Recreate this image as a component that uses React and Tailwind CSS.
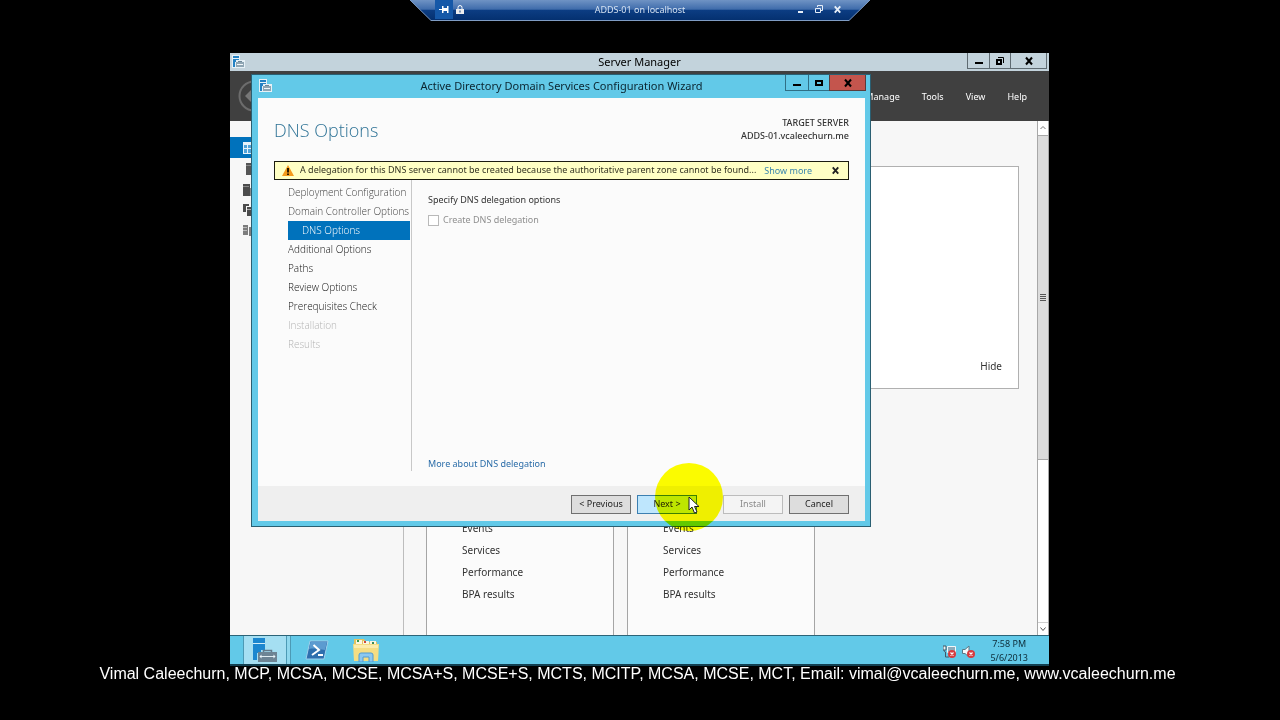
import React from 'react';

const menu = ['Manage', 'Tools', 'View', 'Help'];

const steps = [
  { label: 'Deployment Configuration', state: 'done' },
  { label: 'Domain Controller Options', state: 'done' },
  { label: 'DNS Options', state: 'current' },
  { label: 'Additional Options', state: 'next' },
  { label: 'Paths', state: 'next' },
  { label: 'Review Options', state: 'next' },
  { label: 'Prerequisites Check', state: 'next' },
  { label: 'Installation', state: 'disabled' },
  { label: 'Results', state: 'disabled' },
];

const stepStyles = {
  done: 'text-[#444444]',
  current: 'bg-[#0072bc] pl-[14px] text-white',
  next: 'text-[#111111]',
  disabled: 'text-[#b4b4b4]',
};

const roleLinks = ['Events', 'Services', 'Performance', 'BPA results'];

function ServerIcon({ className }) {
  return (
    <svg className={className} viewBox="0 0 24 24" aria-hidden="true">
      <path d="M0 0h12v5H0z" fill="#1c87cf" />
      <path d="M0 6h12v6H8v3H4v7H0z" fill="#1c87cf" />
      <path d="M0 5h12v1H0z" fill="#d3ecf7" />
      <path d="M10.500 14.500v-2h8v2" fill="none" stroke="#64798a" strokeWidth="1.500" />
      <path d="M5 14h19v10H5z" fill="#6d8494" />
      <path d="M7 18.500h15" stroke="#dfecf2" />
      <path d="M8.500 16.500l-2 2 2 2zM20.500 16.500l2 2-2 2z" fill="#eef6fa" />
    </svg>
  );
}

function SmallServerIcon({ className }) {
  return (
    <svg className={className} viewBox="0 0 13 13" aria-hidden="true">
      <path d="M0 0h8v5h5v8H0z" fill="#e6f1f7" />
      <path d="M1 1h6v2H1zM1 4h6v1H4v2H3v5H1z" fill="#2482c4" />
      <path d="M6 6h4v1H6z" fill="#6d8798" />
      <path d="M4 7h8v5H4z" fill="#8fa6b4" />
      <path d="M5 9h6v1H5z" fill="#f2f7fa" />
    </svg>
  );
}

function MinimizeIcon() {
  return (
    <svg className="h-3 w-3" viewBox="0 0 12 12" aria-hidden="true">
      <path d="M2 7h8v2H2z" fill="currentColor" />
    </svg>
  );
}

function MaximizeIcon() {
  return (
    <svg className="h-3 w-3" viewBox="0 0 12 12" aria-hidden="true">
      <path d="M2 3h8v6H2zM4 5v2h4V5z" fill="currentColor" fillRule="evenodd" />
    </svg>
  );
}

function RestoreIcon() {
  return (
    <svg className="h-3 w-3" viewBox="0 0 12 12" aria-hidden="true">
      <path d="M2 4h6v6H2zM4 6v2h2V6z" fill="currentColor" fillRule="evenodd" />
      <path d="M4 2.500h5.500V8" fill="none" stroke="currentColor" />
    </svg>
  );
}

function CloseIcon({ className = 'h-3 w-3' }) {
  return (
    <svg className={className} viewBox="0 0 12 12" aria-hidden="true">
      <path d="M3 2.500l6 7M9 2.500l-6 7" stroke="currentColor" strokeWidth="2" />
    </svg>
  );
}

function ConnectionBar() {
  return (
    <header className="relative mx-[410px] h-[21px] text-[#d5e2f2]">
      <svg className="absolute inset-0 h-full w-full" viewBox="0 0 460 21" preserveAspectRatio="none" aria-hidden="true">
        <defs>
          <linearGradient id="bar" x1="0" y1="0" x2="0" y2="1">
            <stop offset="0" stopColor="#6f93c4" />
            <stop offset="0.450" stopColor="#3f6cab" />
            <stop offset="0.500" stopColor="#0c3d83" />
            <stop offset="1" stopColor="#04306f" />
          </linearGradient>
        </defs>
        <path d="M0 0h460l-21 20.500H21z" fill="url(#bar)" />
        <path d="M0 0l21 20.500h418L460 0" fill="none" stroke="#7f9cc4" />
      </svg>
      <div className="relative grid h-[19px] grid-cols-[1fr_auto_1fr] items-center px-[25px]">
        <div className="flex h-full items-center">
          <button className="flex h-full w-[18px] items-center justify-center bg-[#1558a8]" aria-label="Pin">
            <svg className="h-[9px] w-[10px]" viewBox="0 0 10 9" aria-hidden="true">
              <path d="M0 4h4v1H0zM3 1h1.500v7H3zM4 3h4v3H4zM8 1h1.500v7H8z" fill="#fff" />
            </svg>
          </button>
          <svg className="ml-[3px] h-[9px] w-2" viewBox="0 0 8 9" aria-hidden="true">
            <path d="M2 4V2.500a2 2 0 0 1 4 0V4" fill="none" stroke="#fff" />
            <path d="M0 4h8v5H0zM3.500 5.500v2h1v-2z" fill="#eee" fillRule="evenodd" />
          </svg>
        </div>
        <div className="text-[9px] leading-3">ADDS-01 on localhost</div>
        <div className="flex justify-end gap-[7px] pr-[2px] text-[#e6eef8]">
          <button aria-label="Minimize connection">
            <svg className="h-3 w-3" viewBox="0 0 12 12" aria-hidden="true">
              <path d="M4 7h5v2H4z" fill="currentColor" />
            </svg>
          </button>
          <button aria-label="Restore connection">
            <svg className="h-3 w-3" viewBox="0 0 12 12" aria-hidden="true">
              <path d="M2.500 4.500h5v4h-5zM4.500 3V1.500h5v5H8" fill="none" stroke="currentColor" />
            </svg>
          </button>
          <button aria-label="Close connection">
            <CloseIcon className="h-[11px] w-[11px]" />
          </button>
        </div>
      </div>
    </header>
  );
}

function ServerManagerTitle() {
  return (
    <div className="grid h-[18px] grid-cols-[1fr_auto_1fr] bg-[#c3d3dc] text-black">
      <SmallServerIcon className="mt-[2px] ml-[2px] h-[13px] w-[13px]" />
      <div className="text-[11px] leading-[18px]">Server Manager</div>
      <div className="mr-[2px] flex h-4 justify-end">
        <button className="flex w-[23px] items-center justify-center border border-t-0 border-[#5f6b72]" aria-label="Minimize">
          <MinimizeIcon />
        </button>
        <button className="flex w-5 items-center justify-center border-b border-[#5f6b72]" aria-label="Restore">
          <RestoreIcon />
        </button>
        <button className="flex w-[37px] items-center justify-center border border-t-0 border-[#5f6b72]" aria-label="Close">
          <CloseIcon />
        </button>
      </div>
    </div>
  );
}

function ServerManagerHeader() {
  return (
    <div className="flex h-[50px] items-center justify-between bg-[#404040] pr-[22px] pl-2">
      <button aria-label="Back">
        <svg className="h-8 w-8" viewBox="0 0 32 32" aria-hidden="true">
          <circle cx="16" cy="16" r="14.500" fill="none" stroke="#6c6c6c" strokeWidth="2" />
          <path d="M7 16l8-8v16z" fill="#777" />
        </svg>
      </button>
      <nav className="flex gap-[22px] pt-[2px]">
        {menu.map((item) => (
          <button key={item} className="text-[9px] leading-3 text-white">
            {item}
          </button>
        ))}
      </nav>
    </div>
  );
}

function SideNav() {
  return (
    <aside className="w-[174px] border-r border-[#bdbdbd] pt-4">
      <div className="flex h-[21px] items-center bg-[#0072bc] pl-[13px]">
        <svg className="h-3 w-3" viewBox="0 0 12 12" aria-hidden="true">
          <path d="M0 0h12v12H0z" fill="#e6f3fb" />
          <path d="M1 3h3v3H1zM5 3h6v3H5zM1 7h3v4H1zM5 7h6v4H5z" fill="#4fa3da" />
        </svg>
      </div>
      <div className="flex h-[21px] items-center pl-4">
        <svg className="h-3 w-3" viewBox="0 0 12 12" aria-hidden="true">
          <path d="M0 0h8v12H0z" fill="#555" />
          <path d="M0 2h8v1H0z" fill="#888" />
        </svg>
      </div>
      <div className="flex h-[21px] items-center pl-[13px]">
        <svg className="h-3 w-3" viewBox="0 0 12 12" aria-hidden="true">
          <path d="M0 0h7v12H0zM7 4h5v8H7z" fill="#4c4c4c" />
          <path d="M0 2h6v1H0zM7 4h1v8H7z" fill="#8a8a8a" />
        </svg>
      </div>
      <div className="flex h-5 items-center pl-[13px]">
        <svg className="h-3 w-3" viewBox="0 0 12 12" aria-hidden="true">
          <path d="M0 0h6v2H3v6H0zM4 3h7v9H4z" fill="#4c4c4c" />
          <path d="M4 5h7v1H4z" fill="#aaa" />
        </svg>
      </div>
      <div className="flex h-5 items-center pl-[13px]">
        <svg className="h-3 w-3" viewBox="0 0 12 12" aria-hidden="true">
          <path d="M0 1h5v10H0zM6 3h5v9H6z" fill="#7d7d7d" />
          <path d="M0 3h4v1H0zM0 6h4v1H0z" fill="#bbb" />
        </svg>
      </div>
    </aside>
  );
}

function RoleCard() {
  return (
    <ul className="w-[188px] border-x border-[#a5a5a5] bg-[#fbfbfb] pt-[128px] pl-[35px]">
      {roleLinks.map((link) => (
        <li key={link} className="h-[22px] text-[10px] leading-[22px] text-[#333333]">
          {link}
        </li>
      ))}
    </ul>
  );
}

function ScrollBar() {
  return (
    <div className="flex w-3 flex-col border-x border-[#a8a8a8] bg-white">
      <button className="flex h-[14px] items-center justify-center" aria-label="Scroll up">
        <svg className="h-2 w-2" viewBox="0 0 8 8" aria-hidden="true">
          <path d="M1.500 5L4 2.500 6.500 5" fill="none" stroke="#777" />
        </svg>
      </button>
      <div className="flex-1">
        <div className="flex h-2/3 items-center justify-center border-y border-[#a8a8a8] bg-[#dcdcdc]">
          <svg className="h-[7px] w-[6px]" viewBox="0 0 6 7" aria-hidden="true">
            <path d="M0 0h6v1H0zM0 2h6v1H0zM0 4h6v1H0zM0 6h6v1H0z" fill="#555" />
          </svg>
        </div>
      </div>
      <button className="flex h-[13px] items-center justify-center border-t border-[#cfcfcf]" aria-label="Scroll down">
        <svg className="h-2 w-2" viewBox="0 0 8 8" aria-hidden="true">
          <path d="M1.500 2.500L4 5.500 6.500 2.500" fill="none" stroke="#555" />
        </svg>
      </button>
    </div>
  );
}

function Dashboard() {
  return (
    <div className="flex flex-1 bg-[#f7f7f7]">
      <SideNav />
      <main className="flex flex-1 flex-col pt-[45px] pl-[22px]">
        <div className="mr-[18px] flex h-[223px] items-end justify-end border border-[#b0b0b0] bg-white pr-4 pb-[14px]">
          <button className="text-[10px] leading-4 text-[#333333]">Hide</button>
        </div>
        <div className="flex flex-1 gap-[13px]">
          <RoleCard />
          <RoleCard />
        </div>
      </main>
      <ScrollBar />
    </div>
  );
}

function WizardTitle() {
  return (
    <div className="grid h-[23px] grid-cols-[1fr_auto_1fr]">
      <SmallServerIcon className="mt-[4px] ml-px h-[13px] w-[13px]" />
      <h1 className="text-[11px] leading-[22px] text-[#0b2530]">Active Directory Domain Services Configuration Wizard</h1>
      <div className="-mr-px flex h-4 justify-end text-black">
        <button className="flex w-6 items-center justify-center border border-t-0 border-[#2f6f86]" aria-label="Minimize wizard">
          <MinimizeIcon />
        </button>
        <button className="flex w-5 items-center justify-center border-b border-[#2f6f86]" aria-label="Maximize wizard">
          <MaximizeIcon />
        </button>
        <button className="flex w-[37px] items-center justify-center border border-t-0 border-[#5b3b3b] bg-[#c4554d]" aria-label="Close wizard">
          <CloseIcon />
        </button>
      </div>
    </div>
  );
}

function Notice() {
  return (
    <div className="flex h-[19px] items-center border border-[#1c1c10] bg-[#ffffc4] px-[7px] text-[9px] leading-3">
      <svg className="h-[11px] w-3" viewBox="0 0 12 11" aria-hidden="true">
        <path d="M6 0l6 11H0z" fill="#f49a1c" />
        <path d="M5 3h2v4.500H5zM5 8.500h2V10H5z" fill="#2a1a00" />
      </svg>
      <p className="ml-[6px] pb-[2px] text-[#333322]">
        A delegation for this DNS server cannot be created because the authoritative parent zone cannot be found...
      </p>
      <a href="#more" className="ml-2 text-[#3b86ad]">
        Show more
      </a>
      <button className="ml-auto text-[#222]" aria-label="Dismiss">
        <CloseIcon className="h-[11px] w-[11px]" />
      </button>
    </div>
  );
}

function Wizard() {
  return (
    <section className="absolute top-[21px] right-[178px] bottom-[139px] left-[21px] flex flex-col border border-[#2a5f72] bg-[#62c9e8] pr-[5px] pb-[5px] pl-[6px]">
      <WizardTitle />
      <div className="flex flex-1 flex-col bg-[#fbfbfb] px-4">
        <div className="flex h-[63px] justify-between">
          <h2 className="pt-5 font-['Open_Sans',sans-serif] text-[18px] leading-6 font-light text-[#2f7396]">DNS Options</h2>
          <div className="pt-[18px] text-right text-[9px] leading-[13px] font-medium text-[#333333]">
            <div>TARGET SERVER</div>
            <div>ADDS-01.vcaleechurn.me</div>
          </div>
        </div>
        <Notice />
        <div className="flex flex-1">
          <ol className="w-[138px] border-r border-[#c8c8c8] pt-[3px] pr-px pl-[14px] font-['Open_Sans',sans-serif] text-[10px] leading-[19px] font-light whitespace-nowrap">
            {steps.map((step) => (
              <li key={step.label} className={stepStyles[step.state]}>
                {step.label}
              </li>
            ))}
          </ol>
          <div className="flex flex-1 flex-col pt-[13px] pl-4 text-[9px] leading-[14px]">
            <p className="text-[#333333]">Specify DNS delegation options</p>
            <div className="mt-[6px] flex items-center gap-1 text-[#8f8f8f]">
              <input
                id="delegation"
                type="checkbox"
                disabled
                className="h-[11px] w-[11px] appearance-none border border-[#b9b9b9] bg-white"
              />
              <label htmlFor="delegation">Create DNS delegation</label>
            </div>
            <a href="#delegation-help" className="mt-auto text-[#2a6ca8]">
              More about DNS delegation
            </a>
          </div>
        </div>
        <div className="h-[15px]" />
      </div>
      <div className="flex h-[35px] items-center justify-end gap-[6px] bg-[#efefef] pt-px pr-4 text-[9px] leading-3">
        <button className="h-[19px] w-[60px] border border-[#707070] bg-[#dddddd] text-[#222]">&lt; Previous</button>
        <button className="mr-5 h-[19px] w-[60px] border border-[#3c7fb1] bg-[#bee6fd] text-[#222]">Next &gt;</button>
        <button className="h-[19px] w-[60px] border border-[#bcbcbc] bg-[#f4f4f4] text-[#8a8a8a]" disabled>
          Install
        </button>
        <button className="h-[19px] w-[60px] border border-[#707070] bg-[#dddddd] text-[#222]">Cancel</button>
      </div>
    </section>
  );
}

function Pointer() {
  return (
    <>
      <div className="pointer-events-none absolute right-[326px] bottom-[135px] h-[68px] w-[68px] rounded-full bg-[#ffff00] mix-blend-multiply" />
      <svg className="pointer-events-none absolute right-[349px] bottom-[152px] h-[18px] w-[12px]" viewBox="0 0 12 18" aria-hidden="true">
        <path d="M1 1v13l3-3 2.500 6 2.500-1-2.500-5.500H11z" fill="#fff" stroke="#222" />
      </svg>
    </>
  );
}

function TaskBar() {
  return (
    <div className="flex h-[31px] items-center border-t border-b-2 border-t-[#2c6478] border-b-[#123f50] bg-[#62c9e8] pl-[13px]">
      <button className="flex h-full w-[44px] items-center justify-center border-x border-[#4c9ab5] bg-[#a5dff2]" aria-label="Server Manager">
        <ServerIcon className="h-6 w-6" />
      </button>
      <div className="h-full w-[4px] border-r border-[#4c9ab5] bg-[#8fd8ee]" />
      <button className="ml-[14px]" aria-label="PowerShell">
        <svg className="h-5 w-6" viewBox="0 0 24 20" aria-hidden="true">
          <path d="M5 1h18l-4 18H1z" fill="#2f6fae" stroke="#9fd0ec" />
          <path d="M5.500 2h16.500l-2 8C14 9 9 8 4 9z" fill="#5c9bd0" />
          <path d="M8.500 5l5.500 5-7 5M13 15h5" fill="none" stroke="#fff" strokeWidth="2" />
        </svg>
      </button>
      <button className="ml-6" aria-label="File Explorer">
        <svg className="h-6 w-[26px]" viewBox="0 0 26 24" aria-hidden="true">
          <path d="M1 1h10l2 3h11v4H1z" fill="#e3c35f" />
          <path d="M3 2h6v4H3zM10 3h6v3h-6zM17 3h6v3h-6z" fill="#fbf6df" />
          <path d="M4 2h2v2H4z" fill="#3a9a4a" />
          <path d="M11 3h2v2h-2z" fill="#cf4b3a" />
          <path d="M19 4h2v2h-2z" fill="#3a8a5a" />
          <path d="M0 6h26l-1 17H1z" fill="#f5dd83" />
          <path d="M1 7h24v3H1z" fill="#fbecae" />
          <path d="M6 24v-7q0-2 2-2h10q2 0 2 2v7h-4v-5h-6v5z" fill="#8cc8f0" stroke="#4f9bd3" />
        </svg>
      </button>
      <div className="ml-auto flex items-center pt-[2px] pr-[21px]">
        <svg className="h-[13px] w-[13px]" viewBox="0 0 13 13" aria-label="Network unavailable">
          <path d="M1 1v4q0 2 1.500 2v5H6" fill="none" stroke="#405866" />
          <path d="M4.500 1.500h8v6h-8z" fill="#8cabbb" stroke="#f2f8fa" />
          <path d="M0 1h3v4H0z" fill="#e8f2f6" stroke="#405866" />
          <circle cx="9" cy="9" r="4" fill="#d63b3f" />
          <path d="M7.500 7.500l3 3M10.500 7.500l-3 3" stroke="#fff" strokeWidth="1.200" />
        </svg>
        <svg className="ml-[6px] h-[13px] w-[13px]" viewBox="0 0 13 13" aria-label="Sound muted">
          <path d="M0.500 4.500h2.500L7 1v11L3 8.500H.500z" fill="#f4fafc" stroke="#5a7886" />
          <circle cx="9" cy="9" r="4" fill="#d63b3f" />
          <path d="M7.500 7.500l3 3M10.500 7.500l-3 3" stroke="#fff" strokeWidth="1.200" />
        </svg>
        <div className="ml-[15px] text-center text-[9px] leading-[14px] text-[#0d2c38]">
          <div>7:58 PM</div>
          <div>5/6/2013</div>
        </div>
      </div>
    </div>
  );
}

export default function App() {
  return (
    <div className="flex min-h-screen flex-col bg-black font-['Noto_Sans',sans-serif]">
      <ConnectionBar />
      <div className="flex flex-1 flex-col pt-8 pr-[231px] pl-[230px]">
        <div className="relative flex flex-1 flex-col">
          <ServerManagerTitle />
          <ServerManagerHeader />
          <Dashboard />
          <TaskBar />
          <Wizard />
          <Pointer />
        </div>
      </div>
      <footer className="pr-[5px] pb-[38px] text-center font-['Liberation_Sans',Arial,sans-serif] text-[16px] leading-4 text-white">
        Vimal Caleechurn, MCP, MCSA, MCSE, MCSA+S, MCSE+S, MCTS, MCITP, MCSA, MCSE, MCT, Email: vimal@vcaleechurn.me,
        www.vcaleechurn.me
      </footer>
    </div>
  );
}
